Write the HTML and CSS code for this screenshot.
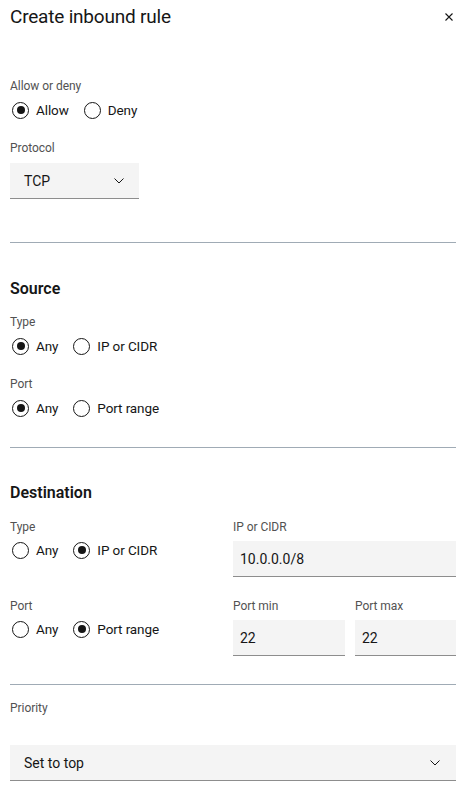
FILE: index.html
```html
<!DOCTYPE html>
<html lang="en">
<head>
<meta charset="utf-8">
<title>Create inbound rule</title>
<link rel="stylesheet" href="styles.css">
</head>
<body>
<div class="panel">
  <header class="header">
    <h1 class="title">Create inbound rule</h1>
    <button class="close" aria-label="Close">
      <svg width="10" height="10" viewBox="0 0 10 10"><path d="M1.5 1.5 L8.5 8.5 M8.5 1.5 L1.5 8.5" stroke="#161616" stroke-width="1.1" fill="none"/></svg>
    </button>
  </header>

  <div class="field f-allow">
    <div class="label">Allow or deny</div>
    <div class="radios">
      <span class="radio"><span class="circle checked"></span>Allow</span>
      <span class="radio"><span class="circle"></span>Deny</span>
    </div>
  </div>

  <div class="field f-protocol">
    <div class="label">Protocol</div>
    <div class="select select-sm"><span>TCP</span>
      <svg class="chev" width="10" height="6" viewBox="0 0 10 6"><path d="M0.5 0.5 L5 5 L9.5 0.5" stroke="#161616" stroke-width="1" fill="none"/></svg>
    </div>
  </div>

  <hr class="divider d1">

  <h2 class="heading h-source">Source</h2>
  <div class="field f-stype">
    <div class="label">Type</div>
    <div class="radios">
      <span class="radio"><span class="circle checked"></span>Any</span>
      <span class="radio"><span class="circle"></span>IP or CIDR</span>
    </div>
  </div>
  <div class="field f-sport">
    <div class="label">Port</div>
    <div class="radios">
      <span class="radio"><span class="circle checked"></span>Any</span>
      <span class="radio"><span class="circle"></span>Port range</span>
    </div>
  </div>

  <hr class="divider d2">

  <h2 class="heading h-dest">Destination</h2>
  <div class="drow r1">
    <div class="field">
      <div class="label">Type</div>
      <div class="radios">
        <span class="radio"><span class="circle"></span>Any</span>
        <span class="radio"><span class="circle checked"></span>IP or CIDR</span>
      </div>
    </div>
    <div class="field">
      <div class="label">IP or CIDR</div>
      <div class="input">10.0.0.0/8</div>
    </div>
  </div>
  <div class="drow r2">
    <div class="field">
      <div class="label">Port</div>
      <div class="radios">
        <span class="radio"><span class="circle"></span>Any</span>
        <span class="radio"><span class="circle checked"></span>Port range</span>
      </div>
    </div>
    <div class="ports">
      <div class="field">
        <div class="label">Port min</div>
        <div class="input">22</div>
      </div>
      <div class="field">
        <div class="label">Port max</div>
        <div class="input">22</div>
      </div>
    </div>
  </div>

  <hr class="divider d3">

  <div class="field f-priority">
    <div class="label lbl-priority">Priority</div>
    <div class="select select-full"><span>Set to top</span>
      <svg class="chev" width="10" height="6" viewBox="0 0 10 6"><path d="M0.5 0.5 L5 5 L9.5 0.5" stroke="#161616" stroke-width="1" fill="none"/></svg>
    </div>
  </div>
</div>
</body>
</html>
```

FILE: styles.css
```css
* { box-sizing: border-box; }
html, body { margin: 0; padding: 0; background: #ffffff; }
body {
  font-family: Roboto, "Liberation Sans", Arial, sans-serif;
  color: #161616;
}
.panel { padding: 0 19px 0 10px; }

.header {
  height: 32px;
  display: flex;
  align-items: center;
  justify-content: space-between;
}
.title {
  margin: 0;
  font-size: 19px;
  font-weight: 400;
  line-height: 28px;
  padding-top: 2px;
  letter-spacing: -0.2px;
}
.close {
  border: 0;
  background: transparent;
  padding: 0;
  width: 10px;
  height: 10px;
  margin-right: 2px;
  margin-top: 1px;
  display: flex;
}

.label {
  font-size: 12px;
  line-height: 16px;
  color: #525252;
  margin-bottom: 6px;
  letter-spacing: -0.05px;
}
.radios {
  display: flex;
  gap: 13px;
  height: 20px;
  align-items: center;
}
.radio {
  display: flex;
  align-items: center;
  font-size: 13.5px;
  line-height: 20px;
  letter-spacing: -0.1px;
}
.circle {
  width: 17px;
  height: 17px;
  border: 1px solid #161616;
  border-radius: 50%;
  margin: 0 7px 0 2px;
  flex: none;
  display: flex;
  align-items: center;
  justify-content: center;
}
.circle.checked::after {
  content: "";
  width: 8px;
  height: 8px;
  border-radius: 50%;
  background: #161616;
}

.f-allow { margin-top: 46px; }
.f-protocol { margin-top: 20px; }
.f-protocol .label { margin-bottom: 7px; }

.select, .input {
  background: #f4f4f4;
  border-bottom: 1px solid #8d8d8d;
  height: 36px;
  display: flex;
  align-items: center;
  font-size: 14px;
}
.select {
  justify-content: space-between;
  padding: 0 15px 0 14px;
}
.select-sm { width: 129px; }
.select-full { width: 100%; padding-right: 16px; }
.chev { flex: none; }
.input { padding: 0 7px; }

.divider {
  border: 0;
  height: 1px;
  background: #a0abb5;
  margin: 0;
}
.d1 { margin-top: 43px; }
.heading {
  margin: 0;
  font-size: 16px;
  font-weight: 600;
  line-height: 24px;
}
.h-source { margin-top: 34px; }
.f-stype { margin-top: 13px; }
.f-sport { margin-top: 20px; }
.d2 { margin-top: 29px; }
.h-dest { margin-top: 33px; }

.drow {
  display: grid;
  grid-template-columns: 1fr 223px;
  column-gap: 10px;
}
.r1 { margin-top: 14px; }
.r1 .radios { margin-top: -1px; }
.r2 { margin-top: 21px; }
.r2 .input { margin-top: 1px; }
.r2 .radios { margin-top: -1px; }
.ports {
  display: grid;
  grid-template-columns: 112px 1fr;
  column-gap: 10px;
}
.d3 { margin-top: 28px; }
.f-priority { margin-top: 15px; }
.lbl-priority { margin-bottom: 29px; }
```
